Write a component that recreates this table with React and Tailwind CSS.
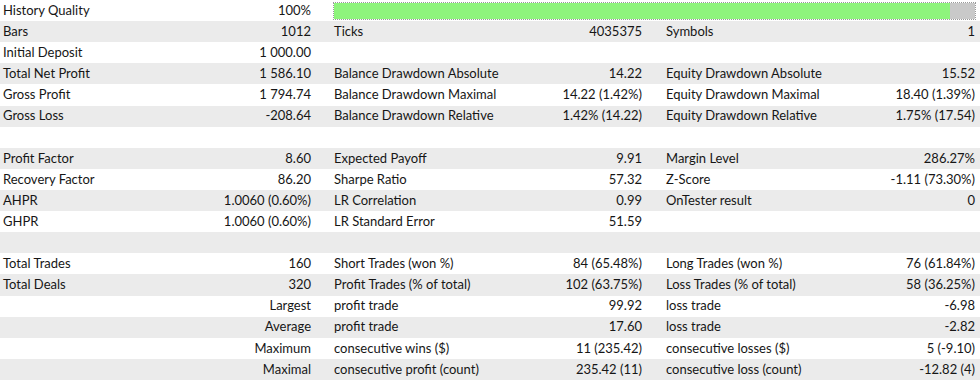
const ROWS = [
  null, // history quality row with bar
  [['Bars', '1012'], ['Ticks', '4035375'], ['Symbols', '1']],
  [['Initial Deposit', '1 000.00'], null, null],
  [['Total Net Profit', '1 586.10'], ['Balance Drawdown Absolute', '14.22'], ['Equity Drawdown Absolute', '15.52']],
  [['Gross Profit', '1 794.74'], ['Balance Drawdown Maximal', '14.22 (1.42%)'], ['Equity Drawdown Maximal', '18.40 (1.39%)']],
  [['Gross Loss', '-208.64'], ['Balance Drawdown Relative', '1.42% (14.22)'], ['Equity Drawdown Relative', '1.75% (17.54)']],
  [null, null, null],
  [['Profit Factor', '8.60'], ['Expected Payoff', '9.91'], ['Margin Level', '286.27%']],
  [['Recovery Factor', '86.20'], ['Sharpe Ratio', '57.32'], ['Z-Score', '-1.11 (73.30%)']],
  [['AHPR', '1.0060 (0.60%)'], ['LR Correlation', '0.99'], ['OnTester result', '0']],
  [['GHPR', '1.0060 (0.60%)'], ['LR Standard Error', '51.59'], null],
  [null, null, null],
  [['Total Trades', '160'], ['Short Trades (won %)', '84 (65.48%)'], ['Long Trades (won %)', '76 (61.84%)']],
  [['Total Deals', '320'], ['Profit Trades (% of total)', '102 (63.75%)'], ['Loss Trades (% of total)', '58 (36.25%)']],
  [['', 'Largest'], ['profit trade', '99.92'], ['loss trade', '-6.98']],
  [['', 'Average'], ['profit trade', '17.60'], ['loss trade', '-2.82']],
  [['', 'Maximum'], ['consecutive wins ($)', '11 (235.42)'], ['consecutive losses ($)', '5 (-9.10)']],
  [['', 'Maximal'], ['consecutive profit (count)', '235.42 (11)'], ['consecutive loss (count)', '-12.82 (4)']],
];

const COL_CLASSES = [
  'w-[331px] pl-[3px] pr-[20px]',
  'w-[332px] pl-[3px] pr-[21px]',
  'w-[317px] pl-[3px] pr-[5px]',
];

function Cell({ item, cls }) {
  return (
    <div className={`${cls} flex items-center justify-between shrink-0`}>
      <span>{item ? item[0] : ''}</span>
      <span>{item ? item[1] : ''}</span>
    </div>
  );
}

function QualityBar() {
  return (
    <div className="flex-1 flex items-center pl-[2px] pr-[4px]">
      <div className="w-full h-[18px] border border-dotted border-[#9a9a9a] flex">
        <div className="flex-1 bg-[#8ef47c]" />
        <div className="w-[25px] bg-[#c9c9c9]" />
      </div>
    </div>
  );
}

export default function App() {
  return (
    <div
      className="w-[980px] h-[380px] bg-white text-[#161616] text-[13px] grid grid-rows-[repeat(18,1fr)] overflow-hidden"
      style={{ fontFamily: 'Lato, "Noto Sans", sans-serif' }}
    >
      {ROWS.map((row, i) => (
        <div key={i} className={`flex ${i % 2 === 1 ? 'bg-[#ebebeb]' : 'bg-white'}`}>
          {row === null ? (
            <>
              <Cell item={['History Quality', '100%']} cls={COL_CLASSES[0]} />
              <QualityBar />
            </>
          ) : (
            row.map((item, j) => <Cell key={j} item={item} cls={COL_CLASSES[j]} />)
          )}
        </div>
      ))}
    </div>
  );
}
